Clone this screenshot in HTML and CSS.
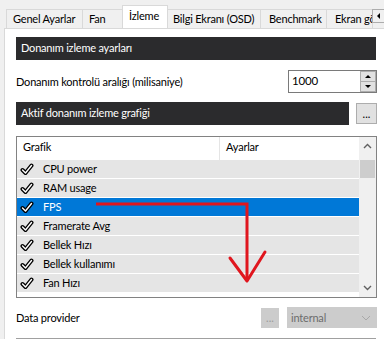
FILE: index.html
```html
<!DOCTYPE html>
<html lang="tr">
<head>
    <meta charset="UTF-8">
    <title>İzleme</title>
    <link rel="stylesheet" href="styles.css">
</head>
<body>
    <div class="window">
        <div class="tabs">
            <div class="tab tab-general">Genel Ayarlar</div>
            <div class="tab tab-fan">Fan</div>
            <div class="tab tab-monitor active">İzleme</div>
            <div class="tab tab-osd">Bilgi Ekranı (OSD)</div>
            <div class="tab tab-bench">Benchmark</div>
            <div class="tab tab-shot">Ekran görüntüsü</div>
            <div class="tab-scroll"><span class="tri-left"></span></div>
        </div>

        <div class="page">
            <div class="section-bar">Donanım izleme ayarları</div>

            <div class="field-row">
                <span>Donanım kontrolü aralığı (milisaniye)</span>
                <div class="spin">
                    <span class="spin-value">1000</span>
                    <div class="spin-btns">
                        <div class="spin-btn"><span class="tri-up"></span></div>
                        <div class="spin-btn"><span class="tri-down"></span></div>
                    </div>
                </div>
            </div>

            <div class="bar-row">
                <div class="section-bar grow">Aktif donanım izleme grafiği</div>
                <button class="dots-btn">...</button>
            </div>

            <div class="list">
                <div class="list-body">
                    <div class="list-head">
                        <div class="col-name">Grafik</div>
                        <div class="col-set">Ayarlar</div>
                    </div>
                    <div id="rows"></div>
                </div>
                <div class="vscroll">
                    <svg class="chev" width="9" height="6" viewBox="0 0 9 6"><path d="M1 5 L4.5 1.5 L8 5" fill="none" stroke="#606060" stroke-width="1.4"/></svg>
                    <div class="thumb"></div>
                    <div class="vscroll-space"></div>
                    <svg class="chev" width="9" height="6" viewBox="0 0 9 6"><path d="M1 1 L4.5 4.5 L8 1" fill="none" stroke="#606060" stroke-width="1.4"/></svg>
                </div>
            </div>

            <div class="provider-row">
                <span class="grow">Data provider</span>
                <button class="dots-btn disabled">...</button>
                <div class="select disabled">
                    <span>internal</span>
                    <svg width="10" height="6" viewBox="0 0 10 6"><path d="M1 1 L5 5 L9 1" fill="none" stroke="#a8a8a8" stroke-width="1"/></svg>
                </div>
            </div>
            <div class="bottom-line"></div>

            <svg class="annotation" width="384" height="339" viewBox="0 0 384 339">
                <path d="M96 204 L247 204 L247 281" fill="none" stroke="#e0161e" stroke-width="3" stroke-linejoin="miter"/>
                <path d="M230 258 L247 281 L265 252" fill="none" stroke="#e0161e" stroke-width="3" stroke-linecap="round" stroke-linejoin="round"/>
            </svg>
        </div>
    </div>

    <script>
        const items = ['CPU power', 'RAM usage', 'FPS', 'Framerate Avg', 'Bellek Hızı', 'Bellek kullanımı', 'Fan Hızı'];
        const selected = 'FPS';
        // outlined check mark: thick black stroke with a white core
        const check = `<svg class="check" width="14" height="13" viewBox="0 0 14 13">
            <path d="M2.5 7 L5.5 10 L11.5 2.5" fill="none" stroke="#000" stroke-width="4" stroke-linecap="round" stroke-linejoin="round"/>
            <path d="M2.5 7 L5.5 10 L11.5 2.5" fill="none" stroke="#fff" stroke-width="1.4" stroke-linecap="round" stroke-linejoin="round"/>
        </svg>`;

        const rows = document.getElementById('rows');
        items.forEach(name => {
            const row = document.createElement('div');
            row.className = 'list-row' + (name === selected ? ' selected' : '');
            row.innerHTML = `${check}<span>${name}</span>`;
            rows.appendChild(row);
        });
    </script>
</body>
</html>
```

FILE: styles.css
```css
* {
    margin: 0;
    padding: 0;
    box-sizing: border-box;
}

body {
    background: #f0f0f0;
    color: #000;
    font-family: 'Segoe UI', 'Lato', sans-serif;
    font-size: 11px;
    letter-spacing: -0.2px;
    overflow: hidden;
}

.window {
    width: 384px;
    height: 339px;
    position: relative;
    overflow: hidden;
}

/* tab strip */
.tabs {
    display: flex;
    align-items: flex-end;
    height: 28px;
    padding-left: 6px;
    white-space: nowrap;
}

.tab {
    height: 19px;
    line-height: 18px;
    padding-left: 6px;
    border: 1px solid #d9d9d9;
    border-bottom: none;
    margin-right: -1px;
    background: #f0f0f0;
    flex: none;
    overflow: hidden;
}

.tab-general { width: 77px; }
.tab-fan { width: 41px; }
.tab-monitor { width: 46px; }
.tab-osd { width: 94px; padding-left: 5px; }
.tab-bench { width: 67px; padding-left: 8px; }
.tab-shot { width: 47px; padding-left: 8px; }

.tab.active {
    height: 23px;
    line-height: 19px;
    background: #fff;
    position: relative;
    z-index: 1;
}

.tab-scroll {
    position: absolute;
    right: -1px;
    top: 9px;
    width: 13px;
    height: 14px;
    background: #f0f0f0;
    border: 1px solid #adadad;
    display: flex;
    align-items: center;
    justify-content: center;
    z-index: 2;
}

.tri-left {
    border-top: 3px solid transparent;
    border-bottom: 3px solid transparent;
    border-right: 3px solid #000;
}

/* page */
.page {
    background: #fff;
    border-left: 1px solid #d9d9d9;
    border-top: 1px solid #d9d9d9;
    margin-left: 4px;
    height: 311px;
    padding: 8px 8px 0 11px;
}

.section-bar {
    background: #2b2b2d;
    color: #fff;
    height: 23px;
    line-height: 22px;
    padding-left: 5px;
}

.grow {
    flex: 1;
}

.field-row {
    display: flex;
    align-items: center;
    justify-content: space-between;
    margin-top: 10px;
    height: 23px;
}

.spin {
    width: 89px;
    height: 23px;
    border: 1px solid #7a7a7a;
    display: flex;
    margin-right: -1px;
}

.spin-value {
    flex: 1;
    padding-left: 3px;
    line-height: 20px;
    font-size: 11.5px;
}

.spin-btns {
    width: 16px;
    display: flex;
    flex-direction: column;
    border-left: 1px solid #adadad;
}

.spin-btn {
    flex: 1;
    background: #e1e1e1;
    border: 1px solid #adadad;
    border-left: none;
    display: flex;
    align-items: center;
    justify-content: center;
}

.spin-btn + .spin-btn {
    border-top: none;
}

.tri-up {
    border-left: 3px solid transparent;
    border-right: 3px solid transparent;
    border-bottom: 3px solid #000;
}

.tri-down {
    border-left: 3px solid transparent;
    border-right: 3px solid transparent;
    border-top: 3px solid #000;
}

.bar-row {
    display: flex;
    align-items: center;
    gap: 7px;
    margin-top: 9px;
}

.dots-btn {
    width: 21px;
    height: 21px;
    background: #e1e1e1;
    border: 1px solid #adadad;
    font: inherit;
    font-size: 11px;
    line-height: 14px;
    color: #000;
    margin-right: -1px;
}

.dots-btn.disabled {
    width: 18px;
    height: 20px;
    background: #cccccc;
    border-color: #cccccc;
    color: #9a9a9a;
    margin-right: 8px;
}

/* list */
.list {
    margin-top: 11px;
    height: 162px;
    border: 1px solid #828282;
    display: flex;
    margin-right: -1px;
}

.list-body {
    flex: 1;
    overflow: hidden;
}

.list-head {
    display: flex;
    height: 23px;
    line-height: 20px;
}

.col-name {
    width: 203px;
    padding-left: 6px;
    border-right: 1px solid #e5e5e5;
}

.col-set {
    padding-left: 6px;
}

.list-row {
    height: 19px;
    background: #e5e5e5;
    border-bottom: 1px solid #fff;
    display: flex;
    align-items: center;
    padding-left: 3px;
    gap: 9px;
    line-height: 18px;
}

.list-row.selected {
    background: #0078d7;
    color: #fff;
}

.check {
    flex: none;
}

.vscroll {
    width: 17px;
    background: #f0f0f0;
    display: flex;
    flex-direction: column;
    align-items: center;
    padding: 6px 0 6px;
}

.chev {
    flex: none;
}

.thumb {
    width: 15px;
    height: 18px;
    background: #cdcdcd;
    margin-top: 11px;
}

.vscroll-space {
    flex: 1;
}

/* bottom row */
.provider-row {
    display: flex;
    align-items: center;
    margin-top: 9px;
    height: 21px;
}

.select {
    width: 90px;
    height: 21px;
    background: #cccccc;
    color: #6d6d6d;
    display: flex;
    align-items: center;
    justify-content: space-between;
    padding: 0 6px 0 4px;
    margin-right: -1px;
}

.bottom-line {
    margin-top: 10px;
    border-top: 1px solid #a0a0a0;
}

.annotation {
    position: absolute;
    left: 0;
    top: 0;
    pointer-events: none;
}
```
